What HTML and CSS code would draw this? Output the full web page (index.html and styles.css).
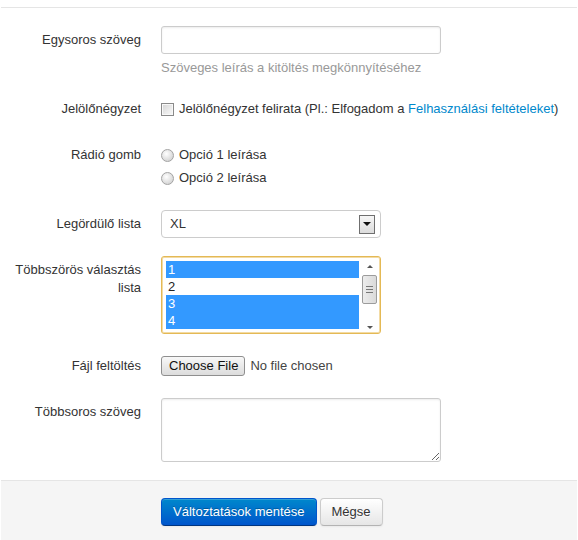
FILE: index.html
```html
<!DOCTYPE html>
<html lang="hu">
<head>
<meta charset="utf-8">
<title>Űrlap</title>
<link rel="stylesheet" href="styles.css">
</head>
<body>
<div class="page">
  <div class="topline"></div>
  <form class="form">
    <div class="group">
      <label class="clabel">Egysoros szöveg</label>
      <div class="controls">
        <input class="text xlarge" type="text">
        <p class="help">Szöveges leírás a kitöltés megkönnyítéséhez</p>
      </div>
    </div>

    <div class="group">
      <label class="clabel">Jelölőnégyzet</label>
      <div class="controls pad">
        <div class="check">
          <span class="cbox"></span>
          <span>Jelölőnégyzet felirata (Pl.: Elfogadom a <a href="#" class="link">Felhasználási feltételeket</a>)</span>
        </div>
      </div>
    </div>

    <div class="group">
      <label class="clabel">Rádió gomb</label>
      <div class="controls pad">
        <div class="check">
          <span class="rbox"></span>
          <span>Opció 1 leírása</span>
        </div>
        <div class="check">
          <span class="rbox"></span>
          <span>Opció 2 leírása</span>
        </div>
      </div>
    </div>

    <div class="group">
      <label class="clabel">Legördülő lista</label>
      <div class="controls">
        <div class="select">
          <span class="select-val">XL</span>
          <span class="select-btn"><span class="tri-down"></span></span>
        </div>
      </div>
    </div>

    <div class="group">
      <label class="clabel">Többszörös választás lista</label>
      <div class="controls">
        <div class="multi">
          <div class="multi-list">
            <div class="opt sel">1</div>
            <div class="opt">2</div>
            <div class="opt sel">3</div>
            <div class="opt sel">4</div>
          </div>
          <div class="sbar">
            <span class="tri-up small"></span>
            <span class="thumb"><span class="grip"></span><span class="grip"></span><span class="grip"></span></span>
            <span class="sbar-fill"></span>
            <span class="tri-down small"></span>
          </div>
        </div>
      </div>
    </div>

    <div class="group">
      <label class="clabel">Fájl feltöltés</label>
      <div class="controls">
        <div class="file">
          <span class="file-btn">Choose File</span>
          <span class="file-txt">No file chosen</span>
        </div>
      </div>
    </div>

    <div class="group">
      <label class="clabel">Többsoros szöveg</label>
      <div class="controls">
        <textarea class="area" rows="3"></textarea>
      </div>
    </div>

    <div class="actions">
      <button type="button" class="btn primary">Változtatások mentése</button>
      <button type="button" class="btn">Mégse</button>
    </div>
  </form>
</div>
</body>
</html>
```
FILE: styles.css
```css
html, body {
  margin: 0;
  padding: 0;
  background: #fff;
}
body {
  font-family: "Liberation Sans", Arial, sans-serif;
  font-size: 13px;
  line-height: 18px;
  color: #333;
}
.page {
  margin-left: 1px;
  width: 576px;
}
.topline {
  height: 7px;
  border-bottom: 1px solid #e5e5e5;
}
.form {
  margin: 18px 0 0 0;
}
.group {
  display: flex;
  align-items: flex-start;
  margin-bottom: 18px;
}
.clabel {
  width: 140px;
  flex: none;
  text-align: right;
  padding-top: 5px;
  line-height: 18px;
}
.controls {
  margin-left: 20px;
  flex: 1;
}
.controls.pad {
  padding-top: 5px;
}
.text {
  display: block;
  box-sizing: border-box;
  height: 28px;
  padding: 4px;
  border: 1px solid #ccc;
  border-radius: 3px;
  box-shadow: inset 0 1px 2px rgba(0,0,0,.08);
  font: 13px/18px "Liberation Sans", Arial, sans-serif;
  color: #555;
  margin: 0;
  outline: none;
}
.xlarge {
  width: 280px;
}
.help {
  margin: 5px 0 0 0;
  color: #999;
  line-height: 18px;
}
.check {
  display: flex;
  align-items: center;
  gap: 5px;
  min-height: 18px;
  margin-bottom: 5px;
  white-space: nowrap;
}
.link {
  color: #0088cc;
  text-decoration: none;
}
.cbox {
  width: 11px;
  height: 11px;
  flex: none;
  border: 1px solid #8a8a8a;
  background: linear-gradient(135deg, #d3d3d3 0%, #ececec 60%, #f7f7f7 100%);
  box-shadow: inset 0 0 0 1px #f8f8f8;
}
.rbox {
  width: 11px;
  height: 11px;
  flex: none;
  border: 1px solid #a3a3a3;
  border-radius: 50%;
  background: radial-gradient(circle at 40% 35%, #ffffff 0%, #e6e6e6 45%, #c8c8c8 100%);
}
.select {
  box-sizing: border-box;
  width: 220px;
  height: 28px;
  border: 1px solid #ccc;
  border-radius: 4px;
  display: flex;
  align-items: center;
  justify-content: space-between;
  padding: 0 5px 0 8px;
}
.select-val {
  color: #333;
}
.select-btn {
  box-sizing: border-box;
  width: 16px;
  height: 19px;
  border: 1px solid #6f6f6f;
  background: linear-gradient(#f6f6f6, #dcdcdc);
  display: flex;
  align-items: center;
  justify-content: center;
}
.tri-down {
  width: 0;
  height: 0;
  border-left: 4px solid transparent;
  border-right: 4px solid transparent;
  border-top: 4px solid #111;
}
.tri-up {
  width: 0;
  height: 0;
  border-left: 4px solid transparent;
  border-right: 4px solid transparent;
  border-bottom: 4px solid #111;
}
.tri-up.small, .tri-down.small {
  border-left-width: 3px;
  border-right-width: 3px;
  border-top-color: #555;
  border-bottom-color: #555;
}
.tri-down.small {
  border-top-width: 3px;
}
.tri-up.small {
  border-bottom-width: 3px;
}
.multi {
  box-sizing: border-box;
  width: 220px;
  height: 78px;
  border: 1px solid #e4b955;
  box-shadow: inset 0 0 0 1px #f3dba4;
  border-radius: 3px;
  padding: 4px 2px 4px 4px;
  display: flex;
  gap: 2px;
}
.multi-list {
  width: 193px;
  flex: none;
}
.opt {
  height: 17px;
  line-height: 17px;
  padding-left: 2px;
  color: #222;
}
.opt.sel {
  background: #3399ff;
  color: #fff;
}
.sbar {
  flex: 1;
  display: flex;
  flex-direction: column;
  align-items: center;
  padding-top: 4px;
}
.thumb {
  box-sizing: border-box;
  width: 15px;
  height: 29px;
  margin-top: 7px;
  border: 1px solid #9c9c9c;
  border-radius: 2px;
  background: linear-gradient(90deg, #ececec, #dadada);
  display: flex;
  flex-direction: column;
  align-items: center;
  justify-content: center;
  gap: 2px;
}
.grip {
  width: 7px;
  height: 1px;
  background: #777;
}
.sbar-fill {
  flex: 1;
}
.file {
  height: 28px;
  display: flex;
  align-items: center;
  gap: 5px;
}
.file-btn {
  box-sizing: border-box;
  height: 20px;
  line-height: 18px;
  padding: 0 6px 0 7px;
  border: 1px solid #8f8f8f;
  border-radius: 3px;
  background: linear-gradient(#f8f8f8, #dcdcdc);
  color: #111;
  font-size: 13px;
}
.file-txt {
  color: #444;
}
.area {
  display: block;
  box-sizing: border-box;
  width: 280px;
  height: 64px;
  margin: 0;
  padding: 4px;
  border: 1px solid #ccc;
  border-radius: 3px;
  box-shadow: inset 0 1px 2px rgba(0,0,0,.08);
  font: 13px/18px "Liberation Sans", Arial, sans-serif;
  outline: none;
}
.actions {
  background: #f5f5f5;
  border-top: 1px solid #e5e5e5;
  padding: 17px 20px 18px 160px;
  display: flex;
  gap: 3px;
}
.btn {
  font: 13px/18px "Liberation Sans", Arial, sans-serif;
  padding: 4px 11px;
  border: 1px solid #ccc;
  border-bottom-color: #b3b3b3;
  border-radius: 4px;
  color: #333;
  text-shadow: 0 1px 1px rgba(255,255,255,.75);
  background: linear-gradient(#ffffff, #e6e6e6);
  box-shadow: inset 0 1px 0 rgba(255,255,255,.2), 0 1px 2px rgba(0,0,0,.05);
  margin: 0;
  cursor: pointer;
}
.btn.primary {
  color: #fff;
  text-shadow: 0 -1px 0 rgba(0,0,0,.25);
  background: linear-gradient(#0088cc, #0055cc);
  border-color: #0055cc #0055cc #003580;
}
```
